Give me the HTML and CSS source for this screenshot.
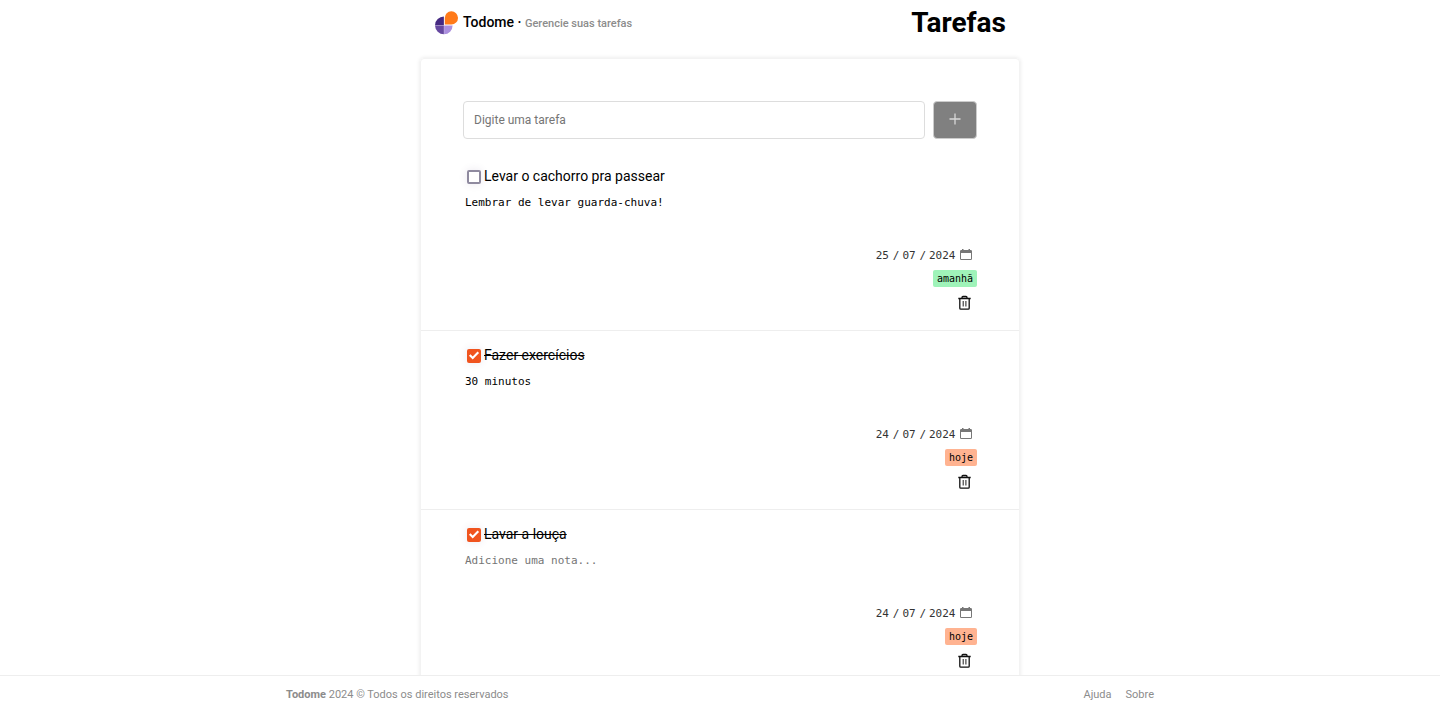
FILE: index.html
```html
<!DOCTYPE html>
<html lang="pt-BR">
<head>
<meta charset="utf-8">
<meta name="viewport" content="width=device-width, initial-scale=1">
<title>Todome</title>
<link rel="stylesheet" href="styles.css">
</head>
<body>
<svg class="sprite" aria-hidden="true">
  <symbol id="trash" viewBox="0 0 14 16"><path d="M4 3V2.500a1 1 0 0 1 1-1h3a1 1 0 0 1 1 1V3M.3 3.500h12.400M1.800 3.500v9.700a1 1 0 0 0 1 1h7.400a1 1 0 0 0 1-1V3.500" fill="none" stroke="#111" stroke-width="1.300" stroke-linejoin="round"/><path d="M5.200 6v5.500M7.900 6v5.500" fill="none" stroke="#333" stroke-width="1.100"/></symbol>
  <symbol id="calendar" viewBox="0 0 12 12"><path d="M2 0h1.500v1h5V0H10v1h.7A1.300 1.300 0 0 1 12 2.300v7.400A1.300 1.300 0 0 1 10.700 11H1.300A1.300 1.300 0 0 1 0 9.700V2.300A1.300 1.300 0 0 1 1.300 1H2zM1 4v5.700c0 .2.100.3.300.3h9.400c.2 0 .3-.1.300-.3V4z" fill="#777" fill-rule="evenodd"/></symbol>
</svg>
<div class="page">
  <div class="container">
    <header class="header">
      <div class="brand">
        <svg class="logo" viewBox="0 0 24 24" aria-hidden="true">
          <path d="M9.900 14.300V5.500A9 9 0 0 0 1 14.300z" fill="#452981"/>
          <path d="M1 14.600a9 9 0 0 0 8.900 8.700v-8.700z" fill="#6648a0"/>
          <path d="M10.100 14.600v8.700a8.700 8.700 0 0 0 8.500-8.700z" fill="#ab8fde"/>
          <path d="M10.800 13.500V7a6.600 6.600 0 1 1 6.600 6.500z" fill="#ff7a19"/>
        </svg>
        <p class="brand-text">Todome · <span class="tagline">Gerencie suas tarefas</span></p>
      </div>
      <h1 class="title">Tarefas</h1>
    </header>
    <main class="card">
      <form class="new-task">
        <input class="new-input" type="text" placeholder="Digite uma tarefa" aria-label="Nova tarefa">
        <button class="add" type="button" aria-label="Adicionar"><svg class="plus" viewBox="0 0 12 12"><path d="M6 .5v11M.5 6h11" stroke="#d8d8d8" stroke-width="1.300"/></svg></button>
      </form>
      <ul class="tasks">
        <li class="task">
          <label class="task-name"><input class="check" type="checkbox"><span>Levar o cachorro pra passear</span></label>
          <textarea class="note" placeholder="Adicione uma nota..." aria-label="Nota">Lembrar de levar guarda-chuva!</textarea>
          <div class="date" role="group" aria-label="Prazo">
            <input class="part" value="25" aria-label="Dia"><span>/</span><input class="part" value="07" aria-label="Mês"><span>/</span><input class="part year" value="2024" aria-label="Ano">
            <button class="pick" type="button" aria-label="Abrir calendário"><svg class="calendar"><use href="#calendar"/></svg></button>
          </div>
          <span class="tag tomorrow">amanhã</span>
          <button class="delete" type="button" aria-label="Excluir"><svg class="trash"><use href="#trash"/></svg></button>
        </li>
        <li class="task">
          <label class="task-name"><input class="check" type="checkbox" checked><span>Fazer exercícios</span></label>
          <textarea class="note" placeholder="Adicione uma nota..." aria-label="Nota">30 minutos</textarea>
          <div class="date" role="group" aria-label="Prazo">
            <input class="part" value="24" aria-label="Dia"><span>/</span><input class="part" value="07" aria-label="Mês"><span>/</span><input class="part year" value="2024" aria-label="Ano">
            <button class="pick" type="button" aria-label="Abrir calendário"><svg class="calendar"><use href="#calendar"/></svg></button>
          </div>
          <span class="tag today">hoje</span>
          <button class="delete" type="button" aria-label="Excluir"><svg class="trash"><use href="#trash"/></svg></button>
        </li>
        <li class="task">
          <label class="task-name"><input class="check" type="checkbox" checked><span>Lavar a louça</span></label>
          <textarea class="note" placeholder="Adicione uma nota..." aria-label="Nota"></textarea>
          <div class="date" role="group" aria-label="Prazo">
            <input class="part" value="24" aria-label="Dia"><span>/</span><input class="part" value="07" aria-label="Mês"><span>/</span><input class="part year" value="2024" aria-label="Ano">
            <button class="pick" type="button" aria-label="Abrir calendário"><svg class="calendar"><use href="#calendar"/></svg></button>
          </div>
          <span class="tag today">hoje</span>
          <button class="delete" type="button" aria-label="Excluir"><svg class="trash"><use href="#trash"/></svg></button>
        </li>
      </ul>
    </main>
  </div>
</div>
<footer class="footer">
  <div class="footer-inner">
    <p class="rights"><b>Todome</b> 2024 © Todos os direitos reservados</p>
    <nav class="links"><a href="#ajuda">Ajuda</a><a href="#sobre">Sobre</a></nav>
  </div>
</footer>
</body>
</html>
```
FILE: styles.css
```css
* { box-sizing: border-box; }

body {
  margin: 0;
  height: 100vh;
  display: flex;
  flex-direction: column;
  background: #fff;
  color: #000;
  font-family: Roboto, sans-serif;
  font-size: 14px;
}

button, input, textarea {
  margin: 0;
  padding: 0;
  border: 0;
  background: none;
  font: inherit;
  color: inherit;
}

svg { display: block; }
p, h1, ul { margin: 0; padding: 0; }
.sprite { position: absolute; width: 0; height: 0; }

.page {
  flex: 1;
  min-height: 0;
  overflow-y: auto;
  scrollbar-width: none;
}

.container { max-width: 600px; margin: 0 auto; }

.header {
  display: flex;
  align-items: center;
  justify-content: space-between;
  height: 58px;
  padding: 0 14px 13px;
}

.brand { display: flex; align-items: center; gap: 5px; }
.logo { width: 24px; height: 24px; }
.brand-text { font-weight: 500; line-height: 20px; }
.tagline { font-size: 11px; color: #8c8c8c; }
.title { font-size: 28px; line-height: 34px; font-weight: 700; }

.card {
  border-radius: 4px;
  border: 1px solid #f3f3f3;
  box-shadow: 0 0 4px rgba(0, 0, 0, 0.1);
}

.new-task { display: flex; gap: 8px; padding: 42px 42px 13px; }

.new-input {
  flex: 1;
  min-width: 0;
  height: 38px;
  padding: 0 10px;
  border: 1px solid #ddd;
  border-radius: 4px;
  font-size: 12px;
}

.new-input::placeholder, .note::placeholder { color: #757575; }

.add {
  display: grid;
  place-items: center;
  width: 44px;
  height: 38px;
  padding-bottom: 2px;
  border: 1px solid #ccc;
  border-radius: 4px;
  background: #808080;
}

.plus { width: 12px; height: 12px; }
.tasks { list-style: none; }

.task {
  display: flex;
  flex-direction: column;
  align-items: flex-end;
  padding: 13px 42px 17px;
  border-bottom: 1px solid #eee;
}

.task-name {
  display: flex;
  align-items: center;
  align-self: flex-start;
  gap: 3px;
  height: 22px;
  padding-left: 4px;
}

.check {
  appearance: none;
  width: 14px;
  height: 14px;
  margin-top: 1px;
  border: 2px solid #8f8a9f;
  border-radius: 2px;
  box-shadow: 0 0 8px rgba(80, 60, 120, 0.12);
}

.check:checked { border: 0; background: #f0541e; }

.check:checked::after {
  content: "";
  display: block;
  width: 14px;
  height: 14px;
  background: #fff;
  clip-path: polygon(14% 52%, 25% 41%, 41% 57%, 75% 21%, 86% 32%, 41% 79%);
}

.check:checked + span { text-decoration: line-through; }

.note {
  width: 100%;
  height: 50px;
  margin-top: 6px;
  padding: 2px;
  resize: none;
  font: 11px/15px "DejaVu Sans Mono", monospace;
}

.date {
  display: flex;
  align-items: center;
  gap: 3px;
  height: 20px;
  margin-top: 2px;
  padding-right: 5px;
  font: 11px "DejaVu Sans Mono", monospace;
  color: #333;
}

.part { width: 14px; }
.year { width: 28px; }
.pick { padding-bottom: 1px; }
.calendar { width: 12px; height: 12px; }

.tag {
  height: 17px;
  margin-top: 5px;
  padding: 0 4px;
  border-radius: 2px;
  font: 10px/17px "DejaVu Sans Mono", monospace;
}

.tomorrow { background: #9ff3b9; }
.today { background: #ffb391; }

.delete {
  display: grid;
  place-items: center;
  height: 20px;
  margin-top: 6px;
  padding-right: 5px;
}

.trash { width: 14px; height: 16px; }

.footer { border-top: 1px solid #eee; background: #fff; color: #8c8c8c; font-size: 11px; }

.footer-inner {
  display: flex;
  align-items: center;
  justify-content: space-between;
  max-width: 868px;
  height: 36px;
  margin: 0 auto;
}

.rights b { font-weight: 700; }
.links { display: flex; gap: 14px; }
.links a { color: inherit; text-decoration: none; }
```
